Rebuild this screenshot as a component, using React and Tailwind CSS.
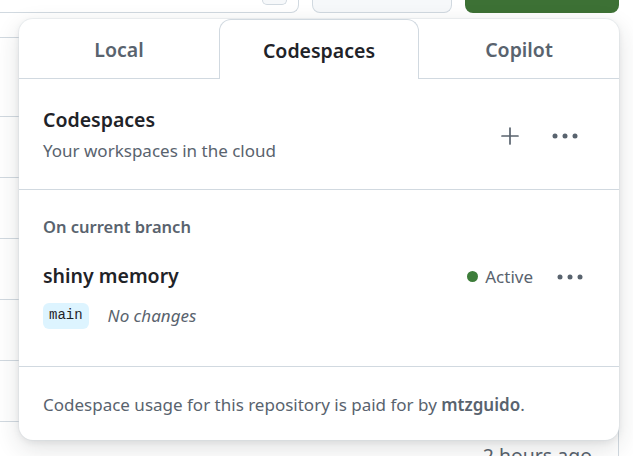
const FONT = { fontFamily: '"Noto Sans", "Open Sans", sans-serif' };

function Kebab({ className = "" }) {
  return (
    <svg width="26" height="6" viewBox="0 0 26 6" className={className}>
      <circle cx="3" cy="3" r="2.5" fill="currentColor" />
      <circle cx="13" cy="3" r="2.5" fill="currentColor" />
      <circle cx="23" cy="3" r="2.5" fill="currentColor" />
    </svg>
  );
}

function PlusIcon() {
  return (
    <svg width="18" height="18" viewBox="0 0 18 18">
      <path d="M9 1v16M1 9h16" stroke="currentColor" strokeWidth="1.7" strokeLinecap="round" />
    </svg>
  );
}

function Background() {
  return (
    <div className="absolute inset-0">
      {/* top toolbar, mostly scrolled out */}
      <div className="flex h-[13px]">
        <div className="relative w-[299px] border-r border-b border-[#d1d9e0] rounded-br-lg bg-white">
          <div className="absolute right-[11px] top-0 w-[25px] h-[5px] bg-[#f6f8fa] border border-t-0 border-[#d1d9e0] rounded-b-md" />
        </div>
        <div className="ml-[13px] w-[140px] bg-[#f6f8fa] border border-t-0 border-[#d1d9e0] rounded-b-lg" />
        <div className="ml-[13px] w-[154px] bg-[#3d7135] rounded-b-lg" />
      </div>

      {/* file table */}
      <div className="mt-[24px] w-[619px] border-t border-r border-[#d1d9e0]">
        <div className="h-[79px] border-b border-[#d1d9e0]" />
        <div className="h-[61px] border-b border-[#d1d9e0]" />
        <div className="h-[61px] border-b border-[#d1d9e0]" />
        <div className="h-[61px] border-b border-[#d1d9e0]" />
        <div className="h-[61px] border-b border-[#d1d9e0]" />
        <div className="h-[61px] border-b border-[#d1d9e0]" />
        <div className="h-[61px] flex justify-end items-center pr-[26px] pt-[6px] text-[19.5px] text-[#59636e]">
          2 hours ago
        </div>
      </div>
    </div>
  );
}

export default function App() {
  return (
    <div className="relative w-[633px] h-[456px] overflow-hidden bg-white" style={FONT}>
      <Background />

      {/* ================= CODE POPOVER ================= */}
      <div className="absolute left-[19px] top-[19px] w-[600px] h-[421px] bg-white rounded-[14px] shadow-[0_0_0_1px_rgba(209,217,224,0.35),0_8px_24px_rgba(37,41,46,0.14),0_2px_6px_rgba(37,41,46,0.08)] overflow-hidden">
        {/* tabs */}
        <div className="grid grid-cols-3 h-[60px]">
          <div className="flex items-center justify-center pt-[2px] border-b border-[#d1d9e0] text-[19.5px] font-semibold text-[#59636e]">
            Local
          </div>
          <div className="flex items-center justify-center pt-[2px] border-x border-t border-[#d1d9e0] rounded-t-[12px] text-[19.5px] font-semibold text-[#1f2328]">
            Codespaces
          </div>
          <div className="flex items-center justify-center pt-[2px] border-b border-[#d1d9e0] text-[19.5px] font-semibold text-[#59636e]">
            Copilot
          </div>
        </div>

        {/* header */}
        <div className="flex items-center justify-between px-6 pt-[29px] pb-[27px] border-b border-[#d1d9e0]">
          <div>
            <div className="text-[19.5px] leading-[24px] font-semibold text-[#1f2328]">Codespaces</div>
            <div className="mt-[8px] text-[17px] leading-[22px] text-[#59636e]">Your workspaces in the cloud</div>
          </div>
          <div className="flex items-center gap-[33px] mr-[17px] mt-[2px] text-[#59636e]">
            <PlusIcon />
            <Kebab />
          </div>
        </div>

        {/* current branch */}
        <div className="px-6 pt-[27px] pb-[37px] border-b border-[#d1d9e0]">
          <div className="text-[16.5px] leading-[20px] font-semibold text-[#59636e]">On current branch</div>
          <div className="mt-[25px] flex items-center justify-between">
            <div className="text-[19.5px] leading-[26px] font-semibold text-[#1f2328]">shiny memory</div>
            <div className="flex items-center mr-[12px] mt-[2px]">
              <span className="w-[11px] h-[11px] rounded-full bg-[#3d7d3a]" />
              <span className="ml-[7px] text-[17px] text-[#59636e]">Active</span>
              <Kebab className="ml-[24px] text-[#59636e]" />
            </div>
          </div>
          <div className="mt-[13px] flex items-center">
            <span
              className="h-[26px] px-[6px] flex items-center rounded-md bg-[#ddf4ff] text-[14px] text-[#1f2328]"
              style={{ fontFamily: '"Liberation Mono", "DejaVu Sans Mono", monospace' }}
            >
              main
            </span>
            <span className="ml-[19px] text-[17px] italic text-[#59636e]">No changes</span>
          </div>
        </div>

        {/* footer */}
        <div className="px-6 pt-[27px] text-[17px] leading-[22px] text-[#59636e]">
          Codespace usage for this repository is paid for by <span className="font-semibold">mtzguido</span>.
        </div>
      </div>
    </div>
  );
}
